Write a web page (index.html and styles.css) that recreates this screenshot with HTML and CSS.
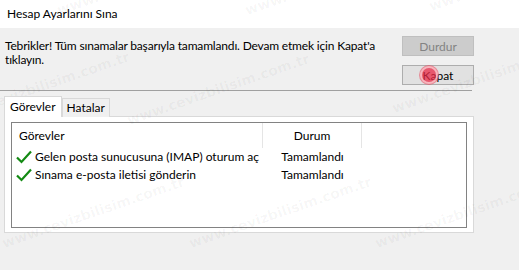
FILE: index.html
```html
<!DOCTYPE html>
<html>
<head>
    <title>Hesap Ayarlarını Sına</title>
    <meta charset="utf-8">
    <link rel="stylesheet" href="styles.css">
</head>
<body>

    <header class="titlebar">Hesap Ayarlarını Sına</header>

    <main class="dialog">
        <section class="top">
            <p class="message">Tebrikler! Tüm sınamalar başarıyla tamamlandı. Devam etmek için Kapat'a<br>tıklayın.</p>
            <div class="buttons">
                <button class="btn" disabled>Durdur</button>
                <button class="btn">Kapat<span class="click"></span></button>
            </div>
        </section>

        <hr class="sep">

        <nav class="tabs">
            <span class="tab active">Görevler</span>
            <span class="tab">Hatalar</span>
        </nav>

        <section class="panel">
            <div class="list">
                <div class="row head">
                    <span class="col-task">Görevler</span>
                    <span class="col-state">Durum</span>
                    <span class="col-rest"></span>
                </div>
                <div class="row">
                    <span class="col-task"><svg class="check" viewBox="0 0 16 14"><path d="M1 7.5 L5.5 12 L15 1.5" /></svg>Gelen posta sunucusuna (IMAP) oturum aç</span>
                    <span class="col-state">Tamamlandı</span>
                </div>
                <div class="row">
                    <span class="col-task"><svg class="check" viewBox="0 0 16 14"><path d="M1 7.5 L5.5 12 L15 1.5" /></svg>Sınama e-posta iletisi gönderin</span>
                    <span class="col-state">Tamamlandı</span>
                </div>
            </div>
        </section>
    </main>

    <!-- filigran -->
    <div class="watermark">
        <span style="left:60px; top:2px">www.cevizbilisim.com.tr</span>
        <span style="left:248px; top:2px">www.cevizbilisim.com.tr</span>
        <span style="left:432px; top:-2px">www.cevizbilisim.com.tr</span>
        <span style="left:-50px; top:110px">www.cevizbilisim.com.tr</span>
        <span style="left:130px; top:112px">www.cevizbilisim.com.tr</span>
        <span style="left:395px; top:100px">www.cevizbilisim.com.tr</span>
        <span style="left:5px; top:235px">www.cevizbilisim.com.tr</span>
        <span style="left:192px; top:235px">www.cevizbilisim.com.tr</span>
        <span style="left:378px; top:235px">www.cevizbilisim.com.tr</span>
    </div>

</body>
</html>
```

FILE: styles.css
```css
body {
    margin: 0;
    width: 519px;
    height: 270px;
    overflow: hidden;
    position: relative;
    font-family: Lato, "Noto Sans", sans-serif;
    font-size: 12px;
    color: #000;
    background-color: #f0f0f0;
}

.titlebar {
    height: 28px;
    line-height: 28px;
    padding-left: 7px;
    background-color: #fff;
}

.dialog {
    height: 242px;
}

.top {
    display: flex;
    justify-content: space-between;
    width: 474px;
    height: 62px;
}

.message {
    margin: 0;
    padding: 11px 0 0 5px;
    line-height: 14px;
    letter-spacing: -0.17px;
    white-space: nowrap;
}

.buttons {
    display: flex;
    flex-direction: column;
    gap: 9px;
    padding-top: 8px;
}

.btn {
    position: relative;
    width: 72px;
    height: 20px;
    padding: 0;
    font-family: inherit;
    font-size: 12px;
    color: #000;
    background-color: #e1e1e1;
    border: 1px solid #adadad;
}

.btn:disabled {
    color: #838383;
    background-color: #cccccc;
    border-color: #bfbfbf;
}

.click {
    position: absolute;
    left: 19px;
    top: 2px;
    width: 14px;
    height: 14px;
    border-radius: 50%;
    background-color: rgba(232, 40, 70, 0.75);
    box-shadow: 0 0 0 2px rgba(255, 200, 205, 0.7), 0 0 0 3px rgba(232, 80, 100, 0.6);
}

.sep {
    margin: 0;
    width: 472px;
    height: 0;
    border: none;
    border-top: 1px solid #a0a0a0;
}

.tabs {
    display: flex;
    align-items: flex-end;
    height: 25px;
    padding-left: 4px;
}

.tab {
    height: 18px;
    line-height: 18px;
    padding: 0 4px;
    border: 1px solid #d9d9d9;
    border-bottom: none;
    background-color: #f0f0f0;
    position: relative;
    top: 1px;
}

.tab.active {
    height: 20px;
    line-height: 20px;
    padding: 0 5px;
    background-color: #fff;
    z-index: 1;
}

.panel {
    margin-left: 4px;
    width: 456px;
    height: 105px;
    padding: 5px 6px;
    background-color: #fff;
    border: 1px solid #d9d9d9;
}

.list {
    height: 104px;
    border: 1px solid #828282;
    background-color: #fff;
}

.row {
    display: flex;
    height: 18px;
    line-height: 18px;
}

.row.head {
    height: 25px;
    line-height: 25px;
}

.col-task {
    display: flex;
    align-items: center;
    width: 251px;
    padding-left: 7px;
    box-sizing: border-box;
    white-space: nowrap;
    overflow: hidden;
}

.col-state {
    width: 99px;
    text-align: center;
}

.head span {
    border-right: 1px solid #e5e5e5;
}

.head .col-state {
    width: 98px;
}

.head .col-rest {
    border-right: none;
}

.check {
    flex-shrink: 0;
    width: 16px;
    height: 14px;
    margin: 0 3px 0 -3px;
}

.check path {
    fill: none;
    stroke: #138a13;
    stroke-width: 2.2;
}

.watermark {
    position: absolute;
    left: 0;
    top: 0;
    width: 519px;
    height: 270px;
    pointer-events: none;
}

.watermark span {
    position: absolute;
    font-family: "DejaVu Sans", sans-serif;
    font-weight: bold;
    font-size: 14px;
    color: rgba(0, 0, 0, 0.04);
    transform: rotate(-19deg);
    transform-origin: left bottom;
    white-space: nowrap;
}
```
